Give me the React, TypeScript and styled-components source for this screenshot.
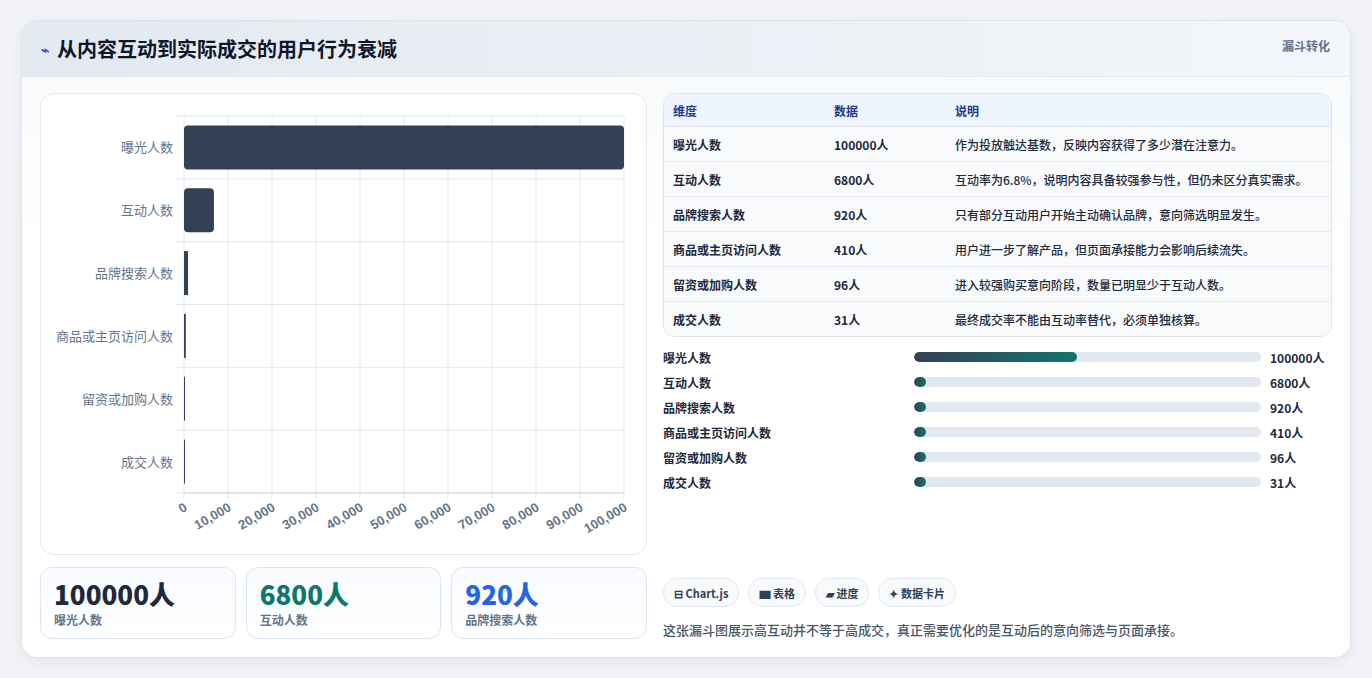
import React from "react";
import styled, { createGlobalStyle } from "styled-components";

const Global = createGlobalStyle`
  body {
    margin: 0;
    background: #f1f3f6;
    font-family: "Noto Sans CJK SC", "Noto Sans", sans-serif;
  }
`;

interface Row {
  name: string;
  value: number;
  note: string;
}

const rows: Row[] = [
  { name: "曝光人数", value: 100000, note: "作为投放触达基数，反映内容获得了多少潜在注意力。" },
  { name: "互动人数", value: 6800, note: "互动率为6.8%，说明内容具备较强参与性，但仍未区分真实需求。" },
  { name: "品牌搜索人数", value: 920, note: "只有部分互动用户开始主动确认品牌，意向筛选明显发生。" },
  { name: "商品或主页访问人数", value: 410, note: "用户进一步了解产品，但页面承接能力会影响后续流失。" },
  { name: "留资或加购人数", value: 96, note: "进入较强购买意向阶段，数量已明显少于互动人数。" },
  { name: "成交人数", value: 31, note: "最终成交率不能由互动率替代，必须单独核算。" },
];

const Chart = () => {
  const left = 143;
  const right = 583;
  const top = 22;
  const bottom = 399;
  const rh = (bottom - top) / 6;
  const w = right - left;
  const ticks = Array.from({ length: 11 }, (_, i) => i * 10000);
  return (
    <svg width="606" height="460" viewBox="0 0 606 460">
      {ticks.map((t) => {
        const x = left + (t / 100000) * w;
        return <line key={t} x1={x} x2={x} y1={top} y2={bottom + 6} stroke="#e2e8f0" />;
      })}
      {Array.from({ length: 7 }, (_, i) => (
        <line key={i} x1={left - 8} x2={right} y1={top + rh * i} y2={top + rh * i} stroke="#e2e8f0" />
      ))}
      <line x1={left} x2={right} y1={bottom} y2={bottom} stroke="#cbd5e1" />
      {rows.map((r, i) => {
        const cy = top + rh * (i + 0.5);
        const bw = Math.max(1, (r.value / 100000) * w);
        return (
          <g key={r.name}>
            <rect x={left} y={cy - 22} width={bw} height={44} rx={bw > 8 ? 4 : 0} fill="#334155" />
            <text x={132} y={cy + 5} textAnchor="end" fontSize="13" fill="#64748b">
              {r.name}
            </text>
          </g>
        );
      })}
      {ticks.map((t) => {
        const x = left + (t / 100000) * w;
        return (
          <text
            key={t}
            transform={`translate(${x + 4},${bottom + 17}) rotate(-30)`}
            textAnchor="end"
            fontSize="13"
            fontWeight="700"
            fill="#64748b"
            fontFamily="Liberation Sans, sans-serif"
          >
            {t.toLocaleString("en-US")}
          </text>
        );
      })}
    </svg>
  );
};

const App = () => {
  return (
    <>
      <Global />
      <Page>
        <Card>
          <Header>
            <Title>
              <Spark>⌁</Spark>从内容互动到实际成交的用户行为衰减
            </Title>
            <Tag>漏斗转化</Tag>
          </Header>
          <Body>
            <LeftCol>
              <ChartBox>
                <Chart />
              </ChartBox>
              <Stats>
                <Stat>
                  <StatValue $color="#1e293b">100000人</StatValue>
                  <StatLabel>曝光人数</StatLabel>
                </Stat>
                <Stat>
                  <StatValue $color="#0f766e">6800人</StatValue>
                  <StatLabel>互动人数</StatLabel>
                </Stat>
                <Stat>
                  <StatValue $color="#2563eb">920人</StatValue>
                  <StatLabel>品牌搜索人数</StatLabel>
                </Stat>
              </Stats>
            </LeftCol>
            <RightCol>
              <TableWrap>
                <Table>
                  <colgroup>
                    <col style={{ width: 161 }} />
                    <col style={{ width: 121 }} />
                    <col />
                  </colgroup>
                  <thead>
                    <tr>
                      <Th>维度</Th>
                      <Th>数据</Th>
                      <Th>说明</Th>
                    </tr>
                  </thead>
                  <tbody>
                    {rows.map((r) => (
                      <Tr key={r.name}>
                        <Td $bold>{r.name}</Td>
                        <Td $bold>{r.value}人</Td>
                        <Td>{r.note}</Td>
                      </Tr>
                    ))}
                  </tbody>
                </Table>
              </TableWrap>
              <Bars>
                {rows.map((r, i) => (
                  <BarRow key={r.name}>
                    <BarLabel>{r.name}</BarLabel>
                    <Track>
                      <Fill style={{ width: i === 0 ? "47%" : "12px" }} />
                    </Track>
                    <BarValue>{r.value}人</BarValue>
                  </BarRow>
                ))}
              </Bars>
              <Spacer />
              <Chips>
                <Chip>⊟ Chart.js</Chip>
                <Chip>▆ 表格</Chip>
                <Chip>▰ 进度</Chip>
                <Chip>✦ 数据卡片</Chip>
              </Chips>
              <Caption>这张漏斗图展示高互动并不等于高成交，真正需要优化的是互动后的意向筛选与页面承接。</Caption>
            </RightCol>
          </Body>
        </Card>
      </Page>
    </>
  );
};

export default App;

const Page = styled.div`
  padding: 20px 21px 21px 21px;
`;

const Card = styled.div`
  background: #fff;
  border: 1px solid #dde3ea;
  border-radius: 16px;
  overflow: hidden;
  box-shadow: 0 4px 14px rgba(15, 23, 42, 0.06);
`;

const Header = styled.div`
  height: 55px;
  display: flex;
  justify-content: space-between;
  padding: 0 20px 0 19px;
  background: linear-gradient(90deg, #e3e9f1, #f3f6fa);
  border-bottom: 1px solid #e2e8f0;
`;

const Title = styled.h1`
  margin: 0;
  display: flex;
  align-items: center;
  gap: 8px;
  font-size: 20px;
  font-weight: 700;
  color: #0f172a;
`;

const Spark = styled.span`
  color: #4f46e5;
  font-size: 14px;
`;

const Tag = styled.div`
  margin-top: 16px;
  font-size: 12px;
  font-weight: 700;
  color: #64748b;
`;

const Body = styled.div`
  display: flex;
  gap: 16px;
  padding: 16px 18px 18px 18px;
  background: linear-gradient(180deg, #f8fafc, #fff 30%);
`;

const LeftCol = styled.div`
  width: 607px;
  display: flex;
  flex-direction: column;
  gap: 12px;
`;

const ChartBox = styled.div`
  height: 460px;
  background: #fff;
  border: 1px solid #e2e8f0;
  border-radius: 14px;
  overflow: hidden;
`;

const Stats = styled.div`
  display: grid;
  grid-template-columns: repeat(3, 1fr);
  gap: 10px;
`;

const Stat = styled.div`
  height: 72px;
  box-sizing: border-box;
  padding: 9px 13px;
  border: 1px solid #dbe6f3;
  border-radius: 12px;
  background: linear-gradient(180deg, #f8fbff, #fff);
`;

const StatValue = styled.div<{ $color: string }>`
  font-size: 26px;
  font-weight: 800;
  line-height: 34px;
  color: ${(p) => p.$color};
`;

const StatLabel = styled.div`
  font-size: 12px;
  color: #64748b;
  font-weight: 600;
`;

const RightCol = styled.div`
  flex: 1;
  display: flex;
  flex-direction: column;
`;

const TableWrap = styled.div`
  border: 1px solid #dbe3ec;
  border-radius: 12px;
  overflow: hidden;
`;

const Table = styled.table`
  width: 100%;
  table-layout: fixed;
  border-collapse: collapse;
  font-size: 12px;
`;

const Th = styled.th`
  height: 32px;
  text-align: left;
  padding: 0 9px;
  background: #eef5ff;
  color: #1e3a8a;
  font-weight: 700;
  border-bottom: 1px solid #dbe3ec;
`;

const Tr = styled.tr`
  background: #f8fafc;
  & + & td {
    border-top: 1px solid #e5eaf0;
  }
`;

const Td = styled.td<{ $bold?: boolean }>`
  height: 34px;
  padding: 0 9px;
  white-space: nowrap;
  color: #1e293b;
  font-weight: ${(p) => (p.$bold ? 700 : 500)};
`;

const Bars = styled.div`
  margin-top: 11px;
  display: flex;
  flex-direction: column;
  gap: 7px;
`;

const BarRow = styled.div`
  display: grid;
  grid-template-columns: 242px 347px 1fr;
  align-items: center;
  column-gap: 9px;
  height: 18px;
`;

const BarLabel = styled.div`
  font-size: 12px;
  font-weight: 600;
  color: #1e293b;
`;

const Track = styled.div`
  height: 10px;
  border-radius: 5px;
  background: #e2e8f0;
  overflow: hidden;
`;

const Fill = styled.div`
  height: 100%;
  border-radius: 5px;
  background: linear-gradient(90deg, #334155, #0f766e);
`;

const BarValue = styled.div`
  font-size: 12px;
  font-weight: 700;
  color: #1e293b;
`;

const Spacer = styled.div`
  flex: 1;
`;

const Chips = styled.div`
  display: flex;
  gap: 9px;
`;

const Chip = styled.div`
  height: 27px;
  padding: 0 10px;
  display: flex;
  align-items: center;
  border: 1px solid #e2e8f0;
  border-radius: 14px;
  background: #f8fafc;
  font-size: 11px;
  font-weight: 700;
  color: #334155;
`;

const Caption = styled.div`
  margin-top: 13px;
  font-size: 13px;
  color: #475569;
  font-weight: 500;
`;
